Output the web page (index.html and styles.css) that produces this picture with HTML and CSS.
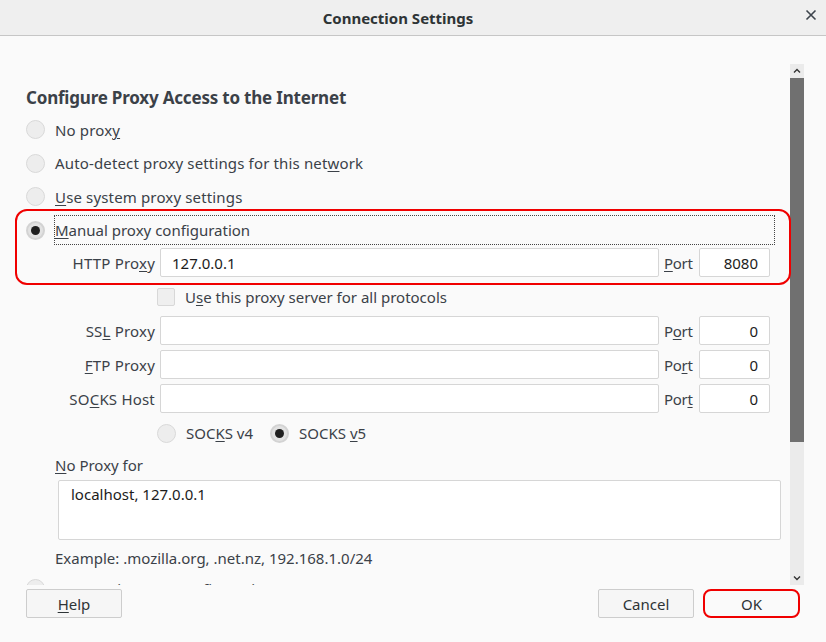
FILE: index.html
```html
<!DOCTYPE html>
<html>
<head>
<meta charset="utf-8">
<title>Connection Settings</title>
<link rel="stylesheet" href="styles.css">
</head>
<body>
<div class="window">
  <header class="titlebar">
    <span class="title">Connection Settings</span>
    <span class="close"><svg width="12" height="12" viewBox="0 0 12 12"><path d="M1.5 1.5 L10.5 10.5 M10.5 1.5 L1.5 10.5" stroke="#3d444c" stroke-width="1.6" fill="none"/></svg></span>
  </header>
  <div class="body">
    <div class="scroll">
      <div class="content">
        <h1 class="heading">Configure Proxy Access to the Internet</h1>
        <div class="option"><span class="radio"></span><span class="label">No prox<u>y</u></span></div>
        <div class="option"><span class="radio"></span><span class="label">Auto-detect proxy settings for this net<u>w</u>ork</span></div>
        <div class="option"><span class="radio"></span><span class="label"><u>U</u>se system proxy settings</span></div>
        <div class="highlight">
          <div class="option"><span class="radio checked"></span><span class="label focus"><u>M</u>anual proxy configuration</span></div>
          <div class="proxy-grid http">
            <span class="plabel">HTTP Pro<u>x</u>y</span>
            <span class="field">127.0.0.1</span>
            <span class="portlabel"><u>P</u>ort</span>
            <span class="field port">8080</span>
          </div>
        </div>
        <div class="all-protocols"><span class="checkbox"></span><span class="label">U<u>s</u>e this proxy server for all protocols</span></div>
        <div class="proxy-grid">
          <span class="plabel">SS<u>L</u> Proxy</span>
          <span class="field"></span>
          <span class="portlabel">P<u>o</u>rt</span>
          <span class="field port">0</span>
          <span class="plabel"><u>F</u>TP Proxy</span>
          <span class="field"></span>
          <span class="portlabel">Po<u>r</u>t</span>
          <span class="field port">0</span>
          <span class="plabel">SO<u>C</u>KS Host</span>
          <span class="field"></span>
          <span class="portlabel">Por<u>t</u></span>
          <span class="field port">0</span>
        </div>
        <div class="socks">
          <span class="radio"></span><span class="label">SOC<u>K</u>S v4</span>
          <span class="radio checked"></span><span class="label">SOCKS <u>v</u>5</span>
        </div>
        <div class="noproxy-label"><u>N</u>o Proxy for</div>
        <div class="textarea">localhost, 127.0.0.1</div>
        <div class="example">Example: .mozilla.org, .net.nz, 192.168.1.0/24</div>
        <div class="option last"><span class="radio"></span><span class="label">Automatic proxy configuration URL</span></div>
      </div>
      <div class="scrollbar">
        <span class="arrow"><svg width="8" height="6" viewBox="0 0 8 6"><path d="M1 4.5 L4 1.5 L7 4.5" stroke="#333" stroke-width="1.4" fill="none"/></svg></span>
        <span class="thumb"></span>
        <span class="track"></span>
        <span class="arrow"><svg width="8" height="6" viewBox="0 0 8 6"><path d="M1 1.5 L4 4.5 L7 1.5" stroke="#333" stroke-width="1.4" fill="none"/></svg></span>
      </div>
    </div>
    <footer class="buttons">
      <span class="button"><u>H</u>elp</span>
      <span class="spacer"></span>
      <span class="button">Cancel</span>
      <span class="button ok">OK</span>
    </footer>
  </div>
</div>
</body>
</html>
```

FILE: styles.css
```css
html, body {
  margin: 0;
  padding: 0;
}
body {
  width: 826px;
  height: 642px;
  overflow: hidden;
  background: #fafafa;
  font-family: "Noto Sans", "Open Sans", sans-serif;
  font-size: 15px;
  color: #3b4148;
}
u {
  text-decoration: underline;
  text-underline-offset: 2px;
  text-decoration-thickness: 1px;
}
.window {
  display: flex;
  flex-direction: column;
  height: 642px;
}
.titlebar {
  height: 35px;
  flex: none;
  background: #efefef;
  border-bottom: 1px solid #c6c6c6;
  display: flex;
  align-items: center;
  justify-content: center;
  position: relative;
}
.title {
  font-weight: bold;
  font-size: 15px;
  color: #2e3436;
  margin-left: -30px;
}
.close {
  position: absolute;
  right: 9px;
  top: 9px;
  width: 12px;
  height: 12px;
  display: flex;
}
.body {
  flex: 1;
  display: flex;
  flex-direction: column;
  padding-top: 28px;
}
.scroll {
  height: 521px;
  display: flex;
  overflow: hidden;
  flex: none;
}
.content {
  width: 749px;
  padding: 22px 15px 0 26px;
  flex: none;
}
.heading {
  margin: 0 0 3px 0;
  font-size: 17px;
  line-height: 24px;
  font-weight: bold;
  letter-spacing: -0.2px;
  color: #3b4148;
}
.option {
  height: 33.5px;
  display: flex;
  align-items: center;
}
.option .label {
  margin-left: 10px;
  letter-spacing: 0.15px;
}
.radio {
  width: 19px;
  height: 19px;
  box-sizing: border-box;
  border-radius: 50%;
  background: #ededed;
  border: 1px solid #d9d9d9;
  flex: none;
  display: flex;
  align-items: center;
  justify-content: center;
}
.radio.checked {
  background: #e2e2e2;
  border: 2px solid #d3d3d3;
}
.radio.checked::after {
  content: "";
  width: 9px;
  height: 9px;
  border-radius: 50%;
  background: #1f1f1f;
}
.label.focus {
  flex: 1;
  height: 30px;
  margin-left: 9px;
  margin-top: -1px;
  display: flex;
  align-items: center;
  outline: 1px dotted #444;
  outline-offset: -1px;
  padding-left: 1px;
  letter-spacing: 0;
}
.highlight {
  position: relative;
}
.highlight::after {
  content: "";
  position: absolute;
  left: -11px;
  right: -16px;
  top: -5px;
  bottom: -8px;
  border: 2.5px solid #f00000;
  border-radius: 12px;
  pointer-events: none;
}
.proxy-grid {
  display: grid;
  grid-template-columns: 100px 499px 30px 71px;
  column-gap: 5px;
  row-gap: 5px;
  margin-left: 29px;
  align-items: center;
}
.proxy-grid.http {
  margin-top: 1px;
}
.plabel {
  text-align: right;
  white-space: nowrap;
  letter-spacing: 0.2px;
}
.portlabel {
  white-space: nowrap;
  letter-spacing: -0.3px;
}
.field {
  height: 29px;
  box-sizing: border-box;
  background: #ffffff;
  border: 1px solid #d6d6d6;
  border-radius: 2px;
  padding: 0 11px;
  display: flex;
  align-items: center;
  color: #1c1c1c;
}
.field.port {
  justify-content: flex-end;
}
.all-protocols {
  height: 39px;
  display: flex;
  align-items: center;
  padding-left: 131px;
}
.checkbox {
  width: 18px;
  height: 18px;
  box-sizing: border-box;
  background: #efefef;
  border: 1px solid #d8d8d8;
  border-radius: 2px;
  flex: none;
}
.all-protocols .label {
  margin-left: 10px;
}
.socks {
  height: 40px;
  display: flex;
  align-items: center;
  padding-left: 131px;
}
.socks .label {
  margin-left: 10px;
  margin-right: 17px;
}
.noproxy-label {
  margin-left: 29px;
  height: 24px;
  line-height: 24px;
}
.textarea {
  margin-top: 3px;
  margin-left: 32px;
  width: 723px;
  height: 60px;
  box-sizing: border-box;
  background: #ffffff;
  border: 1px solid #d6d6d6;
  border-radius: 2px;
  padding: 3px 12px;
  line-height: 20px;
  color: #1c1c1c;
}
.example {
  margin-left: 29px;
  margin-top: 6px;
  height: 24px;
  line-height: 24px;
}
.option.last {
  margin-top: 2px;
}
.scrollbar {
  width: 14px;
  flex: none;
  display: flex;
  flex-direction: column;
  background: #ebebeb;
}
.arrow {
  height: 14px;
  display: flex;
  align-items: center;
  justify-content: center;
  flex: none;
}
.thumb {
  height: 364px;
  background: #707070;
  flex: none;
}
.track {
  flex: 1;
}
.buttons {
  display: flex;
  align-items: center;
  padding: 4px 26px 0 26px;
}
.spacer {
  flex: 1;
}
.button {
  width: 96px;
  height: 29px;
  box-sizing: border-box;
  border: 1px solid #cdcdcd;
  border-radius: 2px;
  background: #f6f6f6;
  display: flex;
  align-items: center;
  justify-content: center;
  color: #2e3436;
}
.button.ok {
  margin-left: 9px;
  width: 97px;
  border: 2.5px solid #f00000;
  border-radius: 8px;
  background: #fafafa;
}
```
